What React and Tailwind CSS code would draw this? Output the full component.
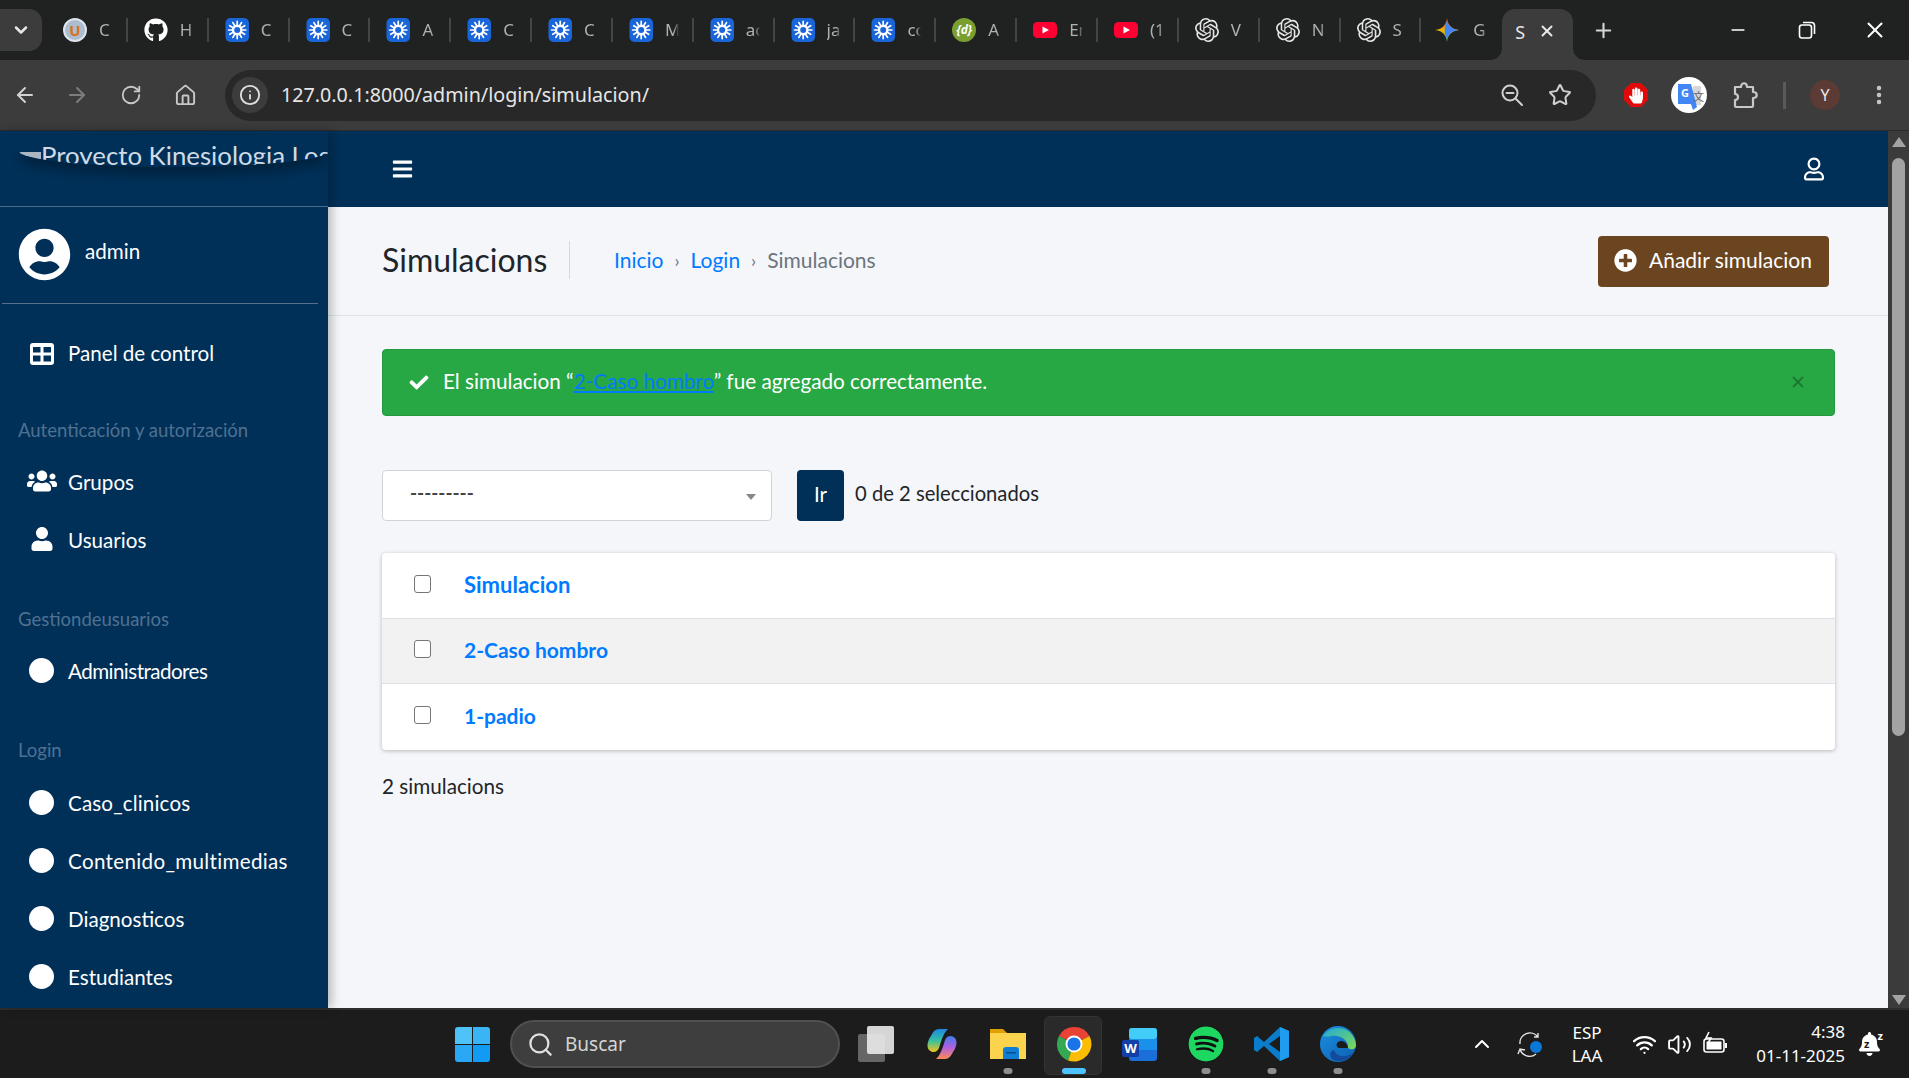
import React from "react";
import { ArrowLeft, ArrowRight, RotateCw, Home, Info, Star, MoreVertical, Plus, X, Minus, Search, ChevronDown, ChevronUp, Wifi, Volume2 } from "lucide-react";
import { FaGithub, FaBars, FaRegUser, FaUser, FaUsers, FaUserCircle, FaCheck, FaPlusCircle, FaBell, FaSpotify, FaHandPaper } from "react-icons/fa";
import { SiOpenai } from "react-icons/si";

const Spark = () => (
  <svg viewBox="0 0 24 24" className="w-6 h-6">
    <rect x="0.5" y="0" width="23.5" height="24" rx="5" fill="#1a66d9" />
    <g stroke="#fff" strokeWidth="1.7" strokeLinecap="round">
      {[0, 30, 60, 90, 120, 150, 180, 210, 240, 270, 300, 330].map((a) => (
        <line key={a} x1="12.2" y1="6.8" x2="12.2" y2="3.4" transform={`rotate(${a} 12.2 12)`} />
      ))}
    </g>
    <circle cx="12.2" cy="12" r="4.2" fill="none" stroke="#fff" strokeWidth="2.4" />
  </svg>
);
const Yt = () => (
  <svg viewBox="0 0 24 24" className="w-6 h-6">
    <rect x="0" y="4" width="24" height="16" rx="4.5" fill="#ff0033" />
    <path d="M9.5 8.5 L16 12 L9.5 15.5 Z" fill="#fff" />
  </svg>
);
const Gpt = () => <SiOpenai className="w-6 h-6 text-[#e6e6e6]" />;
const UFav = () => (
  <div className="w-6 h-6 rounded-full bg-[#aebcd0] border-2 border-[#dfe5ee] flex items-center justify-center text-[15px] font-bold text-[#d9701c] leading-none">U</div>
);
const DFav = () => (
  <div className="w-6 h-6 rounded-full bg-[#7a9f30] flex items-center justify-center text-[12px] font-bold italic text-white leading-none">{"{d}"}</div>
);
const Gem = () => (
  <svg viewBox="0 0 24 24" className="w-6 h-6 -ml-[2px] mr-[2px]">
    <defs>
      <linearGradient id="gemL" x1="0.5" y1="0" x2="0.5" y2="1">
        <stop offset="0" stopColor="#e8453c" />
        <stop offset="0.5" stopColor="#f5b400" />
        <stop offset="1" stopColor="#34a853" />
      </linearGradient>
    </defs>
    <path d="M12 0 C13 7 16 11 24 12 C16 13 13 17 12 24 C11 17 8 13 0 12 C8 11 11 7 12 0 Z" fill="url(#gemL)" />
    <path d="M12 3 C14 8 16 11 24 12 C16 13 14 16 12 21 C9 16 9 8 12 3 Z" fill="#4285f4" />
  </svg>
);
const Git = () => <FaGithub className="w-6 h-6 text-white" />;

const tabs = [
  [UFav, "C"], [Git, "H"], [Spark, "C"], [Spark, "C"], [Spark, "A"], [Spark, "C"], [Spark, "C"], [Spark, "M"], [Spark, "ac"],
  [Spark, "ja"], [Spark, "co"], [DFav, "A"], [Yt, "En"], [Yt, "(1"], [Gpt, "V"], [Gpt, "N"], [Gpt, "S"], [Gem, "G"],
];

const Tab = ({ Icon, t, last }) => (
  <div className="w-[80.85px] shrink-0 h-full flex items-center pl-[16px]">
    <Icon />
    <span className="ml-[12px] w-[14px] overflow-hidden whitespace-nowrap text-[17px] text-[#b0b0b0] leading-[24px] [mask-image:linear-gradient(to_right,black_65%,transparent)]">{t}</span>
    {!last && <span className="ml-auto h-6 w-[2px] bg-[#454545]" />}
  </div>
);

const PanelIcon = () => (
  <svg viewBox="0 0 24 22" className="w-6 h-[22px]">
    <rect width="24" height="22" rx="3" fill="#fff" />
    <rect x="3" y="4" width="7.5" height="5.5" fill="#003058" />
    <rect x="13.5" y="4" width="7.5" height="5.5" fill="#003058" />
    <rect x="3" y="12.5" width="7.5" height="6" fill="#003058" />
    <rect x="13.5" y="12.5" width="7.5" height="6" fill="#003058" />
  </svg>
);

const Circle = () => <span className="w-[25px] h-[25px] rounded-full bg-white block -mt-[4px] -ml-[1px]" />;

const NavItem = ({ icon, label, tcls = "" }) => (
  <div className="h-[58px] flex items-center">
    <span className="w-[68px] shrink-0 flex justify-center pl-[16px]">{icon}</span>
    <span className={`text-[20.6px] text-white -mt-[1px] ${tcls}`}>{label}</span>
  </div>
);
const NavHead = ({ label, cls }) => (
  <div className={`pl-[18px] flex items-center text-[18.5px] text-[#4f7191] ${cls}`}>{label}</div>
);

const Check = () => <span className="w-[17px] h-[18px] rounded-[3px] border border-[#767676] bg-white block" />;
const Row = ({ children, cls, tcls }) => (
  <div className={`flex items-center ${cls}`}>
    <span className="ml-[32px] w-[50px] -mt-[4px]"><Check /></span>
    <a className={`font-bold text-[#007bff] -mt-[2px] ${tcls}`}>{children}</a>
  </div>
);

const TaskCell = ({ children, dot, active }) => (
  <div className="w-[66px] h-full shrink-0 flex items-center justify-center relative">
    {active && <div className="absolute left-[3px] top-[6px] w-[58px] h-[59px] rounded-[6px] bg-[#2a2a2a] border border-[#333]" />}
    <div className="relative">{children}</div>
    {dot && <span className="absolute bottom-[4px] left-1/2 -translate-x-1/2 w-[9px] h-[6px] rounded-full bg-[#8e8e8e]" />}
    {active && <span className="absolute bottom-[4px] left-1/2 -translate-x-1/2 w-[24px] h-[6px] rounded-full bg-[#4cc2ff]" />}
  </div>
);

const ChromeLogo = () => (
  <svg viewBox="0 0 36 36" className="w-9 h-9">
    <path d="M18 18 L3 10 A17.5 17.5 0 0 1 33.5 10 Z" fill="#ea4335" />
    <path d="M18 18 L3 10 A17.5 17.5 0 0 0 12 34.5 Z" fill="#34a853" />
    <path d="M18 18 L33.5 10 A17.5 17.5 0 0 1 12 34.5 Z" fill="#fbbc04" />
    <circle cx="18" cy="18" r="8.5" fill="#fff" />
    <circle cx="18" cy="18" r="6.6" fill="#1a73e8" />
  </svg>
);

export default function App() {
  return (
    <div className="h-screen w-full overflow-hidden flex flex-col font-['Lato',sans-serif]">
      {/* tab strip */}
      <div className="h-[60px] shrink-0 bg-[#202221] flex font-['Noto_Sans',sans-serif]">
        <div className="w-[47px] shrink-0 pt-[9px]">
          <div className="w-[42px] h-[42px] rounded-r-[13px] bg-[#3c3c3c] flex items-center justify-center">
            <ChevronDown size={20} strokeWidth={3} className="text-[#e6e6e6]" />
          </div>
        </div>
        {tabs.map(([I, t], i) => <Tab key={i} Icon={I} t={t} last={i === tabs.length - 1} />)}
        <div className="relative w-[71px] shrink-0 mt-[9px] h-[51px] bg-[#3c3c3c] rounded-t-[13px] flex items-center pl-[13px]">
          <svg viewBox="0 0 12 12" className="absolute -left-[12px] bottom-0 w-3 h-3"><path d="M12 0 V12 H0 A12 12 0 0 0 12 0 Z" fill="#3c3c3c" /></svg>
          <svg viewBox="0 0 12 12" className="absolute -right-[12px] bottom-0 w-3 h-3"><path d="M0 0 V12 H12 A12 12 0 0 1 0 0 Z" fill="#3c3c3c" /></svg>
          <span className="text-[18px] text-[#e6e6e6] leading-none -mt-[6px]">S</span>
          <X size={18} strokeWidth={2.6} className="ml-[13px] -mt-[8px] text-[#e8e8e8]" />
        </div>
        <div className="w-[60px] flex items-center justify-center"><Plus size={23} strokeWidth={2.2} className="text-[#d5d5d5]" /></div>
        <div className="ml-[70px] w-[70px] flex items-center justify-center"><Minus size={20} strokeWidth={2} className="text-white" /></div>
        <div className="w-[68px] flex items-center justify-center">
          <svg viewBox="0 0 18 18" className="w-[18px] h-[18px]" fill="none" stroke="#fff" strokeWidth="1.6"><rect x="1.5" y="4" width="12" height="13" rx="2.5" /><path d="M5 1.5 H13.5 A3 3 0 0 1 16.5 4.5 V13" /></svg>
        </div>
        <div className="w-[67px] flex items-center justify-center"><X size={26} strokeWidth={1.8} className="text-white" /></div>
      </div>
      {/* toolbar */}
      <div className="h-[71px] shrink-0 bg-[#3c3c3c] border-b border-[#2b2b2b] flex items-center font-['Noto_Sans',sans-serif]">
        <div className="w-[51px] flex justify-center -ml-[1px]"><ArrowLeft size={24} strokeWidth={2} className="text-[#d0d0d0]" /></div>
        <div className="w-[54px] flex justify-center"><ArrowRight size={24} strokeWidth={2} className="text-[#7d7d7d]" /></div>
        <div className="w-[54px] flex justify-center"><RotateCw size={22} strokeWidth={2} className="text-[#c8c8c8]" /></div>
        <div className="w-[54px] flex justify-center"><Home size={23} strokeWidth={2} className="text-[#c8c8c8]" /></div>
        <div className="ml-[13px] w-[1371px] h-[51px] rounded-full bg-[#282828] flex items-center">
          <div className="ml-[7px] w-[36px] h-[36px] rounded-full bg-[#3c3c3c] flex items-center justify-center"><Info size={22} strokeWidth={2} className="text-[#e0e0e0]" /></div>
          <span className="ml-[13px] text-[19.7px] text-[#e6e6e6] -mt-[1px]">127.0.0.1:8000/admin/login/simulacion/</span>
          <div className="ml-auto w-[48px] flex justify-center">
            <svg viewBox="0 0 24 24" className="w-6 h-6" fill="none" stroke="#d0d0d0" strokeWidth="2" strokeLinecap="round"><circle cx="10" cy="10" r="7.5" /><path d="M6.5 10 H13.5 M15.5 15.5 L22 22" /></svg>
          </div>
          <div className="w-[48px] mr-[12px] flex justify-center"><Star size={24} strokeWidth={2} className="text-[#d0d0d0]" /></div>
        </div>
        <div className="ml-[16px] w-[48px] flex justify-center">
          <div className="w-[24px] h-[24px] relative flex items-center justify-center">
            <svg viewBox="0 0 24 24" className="absolute inset-0 w-6 h-6"><polygon points="7,0 17,0 24,7 24,17 17,24 7,24 0,17 0,7" fill="#e00a0a" /></svg>
            <FaHandPaper className="relative text-white w-[14px] h-[17px]" />
          </div>
        </div>
        <div className="w-[58px] flex justify-center">
          <svg viewBox="0 0 36 36" className="w-9 h-9">
            <circle cx="18" cy="18" r="18" fill="#fff" />
            <path d="M22 9 H30 V28 H20 Z" fill="#d7d7d7" />
            <path d="M7 7 H20 L26 30 L22 33 L20 27 H7 Z" fill="#4285f4" />
            <text x="10" y="20" fontSize="11" fontWeight="700" fill="#fff" fontFamily="Noto Sans">G</text>
            <text x="22" y="24" fontSize="11" fill="#5f6368" fontFamily="Noto Sans CJK SC">文</text>
          </svg>
        </div>
        <div className="w-[54px] flex justify-center">
          <svg viewBox="0 0 26 28" className="w-[26px] h-[28px]" fill="none" stroke="#c8c8c8" strokeWidth="2.2" strokeLinejoin="round">
            <path d="M3 6 H9 C9 1 15 1 15 6 H21 V11 C26 11 26 17 21 17 V25 Q21 26 20 26 H4 Q3 26 3 25 V19 C7 19 7 13 3 13 Z" />
          </svg>
        </div>
        <div className="ml-[11px] w-[3px] h-[27px] bg-[#5a5a5a]" />
        <div className="ml-[24px] w-[30px] h-[30px] rounded-full bg-[#5b3b33] flex items-center justify-center text-[16px] text-[#e8e8e8]">Y</div>
        <div className="ml-[27px] w-[24px] flex justify-center"><MoreVertical size={24} strokeWidth={2.5} className="text-[#c8c8c8]" /></div>
      </div>

      {/* page */}
      <div className="flex-1 min-h-0 flex">
        <aside className="w-[328px] shrink-0 bg-[#003058] overflow-hidden relative z-10 shadow-[3px_0_10px_rgba(0,0,0,0.28)]">
          <div className="h-[76px] border-b border-[#4a6a85] pl-[18px] pt-[3px]">
            <div className="w-[312px] h-[33px] rounded-[50%] overflow-hidden shadow-[0_8px_12px_rgba(0,0,0,0.3)] flex items-start">
              <span className="mt-[18px] w-[23px] h-[7px] rounded-l-full bg-[#aab6c2] shrink-0" />
              <span className="text-[25.8px] leading-[30px] mt-[6px] whitespace-nowrap text-[#d0dbe5]">Proyecto Kinesiologia Login</span>
            </div>
          </div>
          <div className="mx-[2px] w-[316px] h-[97px] border-b border-[#56708a] pt-[21px] pl-[16px] flex items-start">
            <FaUserCircle className="w-[53px] h-[53px] text-white bg-[#003058] rounded-full" />
            <span className="ml-[14px] mt-[8px] text-[20.6px] text-white">admin</span>
          </div>
          <div className="mt-[21px]">
            <NavItem icon={<PanelIcon />} label="Panel de control" />
            <NavHead label="Autenticación y autorización" cls="h-[71px] pt-[24px]" />
            <NavItem icon={<FaUsers className="w-[30px] h-[24px] text-white -mt-[4px]" />} label="Grupos" />
            <NavItem icon={<FaUser className="w-[22px] h-[24px] text-white -mt-[4px]" />} label="Usuarios" />
            <NavHead label="Gestiondeusuarios" cls="h-[73px] pt-[27px]" />
            <NavItem icon={<Circle />} label="Administradores" tcls="tracking-[-0.55px]" />
            <NavHead label="Login" cls="h-[74px] pt-[26px]" />
            <NavItem icon={<Circle />} label="Caso_clinicos" tcls="tracking-[0.15px]" />
            <NavItem icon={<Circle />} label="Contenido_multimedias" tcls="tracking-[0.33px]" />
            <NavItem icon={<Circle />} label="Diagnosticos" />
            <NavItem icon={<Circle />} label="Estudiantes" />
          </div>
        </aside>

        <main className="flex-1 min-w-0 bg-[#f4f6f9] flex flex-col">
          <div className="h-[76px] shrink-0 bg-[#003058] flex items-center justify-between pl-[64px] pr-[64px]">
            <FaBars className="w-[21px] h-[22px] text-white" />
            <FaRegUser className="w-[20px] h-[24px] text-white -mt-[1px]" />
          </div>
          <div className="h-[109px] shrink-0 border-b border-[#dee2e6] flex items-center pl-[54px] pr-[59px]">
            <h1 className="text-[32px] text-[#212529] w-[188px] border-r border-[#d5d8dc] leading-[38px] -mt-[3px]">Simulacions</h1>
            <nav className="ml-[44px] flex items-center text-[21px] -mt-[2px]">
              <a className="text-[#007bff]">Inicio</a>
              <span className="mx-[11px] text-[#6c757d] text-[18px]">›</span>
              <a className="text-[#007bff]">Login</a>
              <span className="mx-[11px] text-[#6c757d] text-[18px]">›</span>
              <span className="text-[#6c757d]">Simulacions</span>
            </nav>
            <button className="ml-auto w-[231px] h-[51px] rounded-[4px] bg-[#6b4520] text-white text-[21px] flex items-center pl-[16px]">
              <FaPlusCircle className="w-[23px] h-[23px] text-white -mt-[1px]" />
              <span className="ml-[12px] -mt-[2px]">Añadir simulacion</span>
            </button>
          </div>
          <div className="pl-[54px] pr-[53px]">
            <div className="mt-[33px] h-[67px] rounded-[4px] bg-[#28a745] border border-[#24973f] flex items-center pl-[26px] pr-[27px] text-white text-[20.7px]">
              <FaCheck className="w-[22px] h-[19px] -mt-[1px] -ml-[1px]" />
              <span className="ml-[13px] -mt-[1px]">El simulacion “<a className="text-[#007bff] underline">2-Caso hombro</a>” fue agregado correctamente.</span>
              <X size={18} strokeWidth={2.6} className="ml-auto text-[#1c7a34] -mt-[1px]" />
            </div>
            <div className="mt-[54px] h-[51px] flex items-center">
              <div className="w-[390px] h-[51px] rounded-[4px] border border-[#ced4da] bg-white flex items-center pl-[27px] pr-[15px] text-[19px] font-bold text-[#444]">
                <span className="-mt-[4px]">---------</span>
                <span className="ml-auto w-0 h-0 border-x-[5px] border-x-transparent border-t-[6px] border-t-[#888] mt-[2px]" />
              </div>
              <button className="ml-[25px] w-[47px] h-[51px] rounded-[4px] bg-[#003058] text-white text-[20.5px] pb-[3px]">Ir</button>
              <span className="ml-[11px] text-[20.2px] text-[#212529] -mt-[4px]">0 de 2 seleccionados</span>
            </div>
            <div className="mt-[32px] rounded-[4px] bg-white shadow-[0_1px_4px_rgba(0,0,0,0.25)] overflow-hidden">
              <Row cls="h-[65px]" tcls="text-[22px]">Simulacion</Row>
              <Row cls="h-[66px] border-y border-[#dee2e6] bg-[#f2f2f2]" tcls="text-[21px]">2-Caso hombro</Row>
              <Row cls="h-[66px]" tcls="text-[21px]">1-padio</Row>
            </div>
            <p className="mt-[21px] text-[20.7px] text-[#212529]">2 simulacions</p>
          </div>
        </main>

        <div className="w-[21px] shrink-0 bg-[#3b3b3b] flex flex-col items-center relative">
          <span className="mt-[6px] w-0 h-0 border-x-[7px] border-x-transparent border-b-[10px] border-b-[#a3a3a3]" />
          <span className="mt-[11px] w-[13px] h-[578px] rounded-full bg-[#a3a3a3]" />
          <span className="mt-auto mb-[3px] w-0 h-0 border-x-[7px] border-x-transparent border-t-[10px] border-t-[#a3a3a3]" />
        </div>
      </div>

      {/* taskbar */}
      <div className="h-[70px] shrink-0 bg-[#1c1c1c] border-t-2 border-[#2e2e2e] flex items-center font-['Noto_Sans',sans-serif]">
        <div className="ml-[455px] w-[35px] h-[35px] grid grid-cols-2 gap-[1px] shrink-0">
          <span className="rounded-tl-[3px] bg-[#4fc3f7]" /><span className="rounded-tr-[3px] bg-[#3ab4f5]" />
          <span className="rounded-bl-[3px] bg-[#2aa8f5]" /><span className="rounded-br-[3px] bg-[#119bf5]" />
        </div>
        <div className="ml-[20px] w-[330px] h-[48px] rounded-full bg-[#3e3e3e] border-2 border-[#505050] flex items-center pl-[15px] shrink-0">
          <Search size={27} strokeWidth={2} className="text-[#e0e0e0]" />
          <span className="ml-[11px] text-[19px] text-[#d5d5d5]">Buscar</span>
        </div>
        <div className="ml-[3px] h-full flex">
          <TaskCell>
            <div className="w-[36px] h-[36px] relative">
              <span className="absolute left-0 bottom-0 w-[27px] h-[28px] rounded-[2px] bg-[#666]" />
              <span className="absolute right-0 top-0 w-[27px] h-[28px] rounded-[2px] bg-[#eaeaea] opacity-90" />
            </div>
          </TaskCell>
          <TaskCell>
            <svg viewBox="0 0 36 36" className="w-9 h-9">
              <defs>
                <linearGradient id="cp1" x1="0" y1="0" x2="0" y2="1"><stop offset="0" stopColor="#1e88e5" /><stop offset="0.5" stopColor="#34c0a0" /><stop offset="1" stopColor="#f5c518" /></linearGradient>
                <linearGradient id="cp2" x1="0" y1="0" x2="0" y2="1"><stop offset="0" stopColor="#3d7ef0" /><stop offset="0.5" stopColor="#b060e0" /><stop offset="1" stopColor="#ff8a50" /></linearGradient>
              </defs>
              <path d="M15 3 H24 C20 6 17 15 15 22 C13 27 8 27 5 24 C2 20 4 14 7 10 C9 6 11 3 15 3 Z" fill="url(#cp1)" />
              <path d="M21 33 H12 C16 30 19 21 21 14 C23 9 28 9 31 12 C34 16 32 22 29 26 C27 30 25 33 21 33 Z" fill="url(#cp2)" />
            </svg>
          </TaskCell>
          <TaskCell dot>
            <svg viewBox="0 0 36 36" className="w-9 h-9">
              <path d="M0 3 H13 L17 7 H36 V33 H0 Z" fill="#e0a100" />
              <rect x="0" y="7" width="36" height="26" fill="#fcd34d" />
              <path d="M13 33 V24 Q13 21 16 21 H26 Q29 21 29 24 V33 Z" fill="#0f7fd6" />
              <rect x="16" y="26" width="10" height="1.6" fill="#0a4f8f" />
            </svg>
          </TaskCell>
          <TaskCell active><ChromeLogo /></TaskCell>
          <TaskCell>
            <svg viewBox="0 0 36 36" className="w-9 h-9">
              <rect x="7" y="2" width="28" height="33" rx="3" fill="#1b6fd9" />
              <rect x="7" y="2" width="28" height="11" rx="3" fill="#41cdf7" />
              <rect x="7" y="13" width="28" height="11" fill="#1b90ea" />
              <rect x="0" y="14" width="17" height="17" rx="2" fill="#123fa8" />
              <text x="2.2" y="27" fontSize="13" fontWeight="700" fill="#fff" fontFamily="Noto Sans">W</text>
            </svg>
          </TaskCell>
          <TaskCell dot><FaSpotify className="w-9 h-9 text-[#1ed760] bg-[#111] rounded-full" /></TaskCell>
          <TaskCell dot>
            <svg viewBox="0 0 36 36" className="w-9 h-9">
              <path d="M26 1 L35 5 V31 L26 35 L10 20 L3 26 L0 24 V12 L3 10 L10 16 Z" fill="#0a7ccb" />
              <path d="M26 1 L35 5 V31 L26 35 Z" fill="#1f9cf0" />
              <path d="M26 10 L15 18 L26 26 Z" fill="#1c1c1c" />
            </svg>
          </TaskCell>
          <TaskCell dot>
            <svg viewBox="0 0 36 36" className="w-9 h-9">
              <defs>
                <linearGradient id="ed1" x1="0" y1="0" x2="1" y2="1"><stop offset="0" stopColor="#20a8d8" /><stop offset="1" stopColor="#7fdc55" /></linearGradient>
                <linearGradient id="ed2" x1="0" y1="0" x2="1" y2="1"><stop offset="0" stopColor="#1a8fe0" /><stop offset="1" stopColor="#0f5fb0" /></linearGradient>
              </defs>
              <circle cx="18" cy="18" r="18" fill="url(#ed2)" />
              <path d="M3 10 A18 18 0 0 1 36 19 C36 24 31 24 28 22 C29 14 20 9 12 10 C8 10.5 5 11 3 10 Z" fill="url(#ed1)" />
              <path d="M17 17 C20 13 27 15 28 22 H20 C17 22 16 20 17 17 Z" fill="#1c1c1c" />
              <path d="M14 24 C16 30 24 33 33 27 C28 35 18 37 12 33 C9 30 10 24 14 24 Z" fill="#134a9a" />
            </svg>
          </TaskCell>
        </div>
        <div className="ml-[91px] w-[40px] flex justify-center"><ChevronUp size={24} strokeWidth={2} className="text-white" /></div>
        <div className="ml-[8px] w-[40px] flex justify-center">
          <svg viewBox="0 0 28 28" className="w-7 h-7" fill="none" stroke="#e5e5e5" strokeWidth="1.4">
            <path d="M4 14 A10 10 0 0 1 22 7 M22 3 V7 H18" />
            <path d="M20 24 A10 10 0 0 1 4 19 M2 24 L4 19 L9 20" />
            <circle cx="20" cy="17" r="6" fill="#0a78d6" stroke="none" />
          </svg>
        </div>
        <div className="ml-[10px] w-[54px] text-center text-[17px] leading-[23px] text-white">
          <div>ESP</div><div>LAA</div>
        </div>
        <div className="ml-[13px] w-[35px] flex justify-center"><Wifi size={25} strokeWidth={2.2} className="text-white" /></div>
        <div className="w-[35px] flex justify-center"><Volume2 size={25} strokeWidth={1.8} className="text-white" /></div>
        <div className="w-[36px] flex justify-center">
          <svg viewBox="0 0 26 26" className="w-[26px] h-[26px]" fill="none" stroke="#fff" strokeWidth="1.6">
            <rect x="2" y="8" width="20" height="13" rx="2.5" />
            <rect x="4.5" y="10.5" width="15" height="8" fill="#fff" stroke="none" />
            <path d="M24 12 V17" strokeWidth="2" />
            <path d="M7 1 L4 7 H9 L6 12" strokeWidth="1.6" />
          </svg>
        </div>
        <div className="w-[112px] text-right text-[17px] leading-[24px] text-white whitespace-nowrap">
          <div>4:38</div><div>01-11-2025</div>
        </div>
        <div className="ml-[4px] w-[40px] flex justify-center relative">
          <FaBell className="w-[21px] h-[24px] text-white" />
          <span className="absolute left-[15px] top-[6px] text-[11px] font-bold leading-none text-[#1c1c1c]">z</span>
          <span className="absolute right-[6px] -top-[2px] text-[11px] font-bold leading-none text-white">z</span>
        </div>
      </div>
    </div>
  );
}
